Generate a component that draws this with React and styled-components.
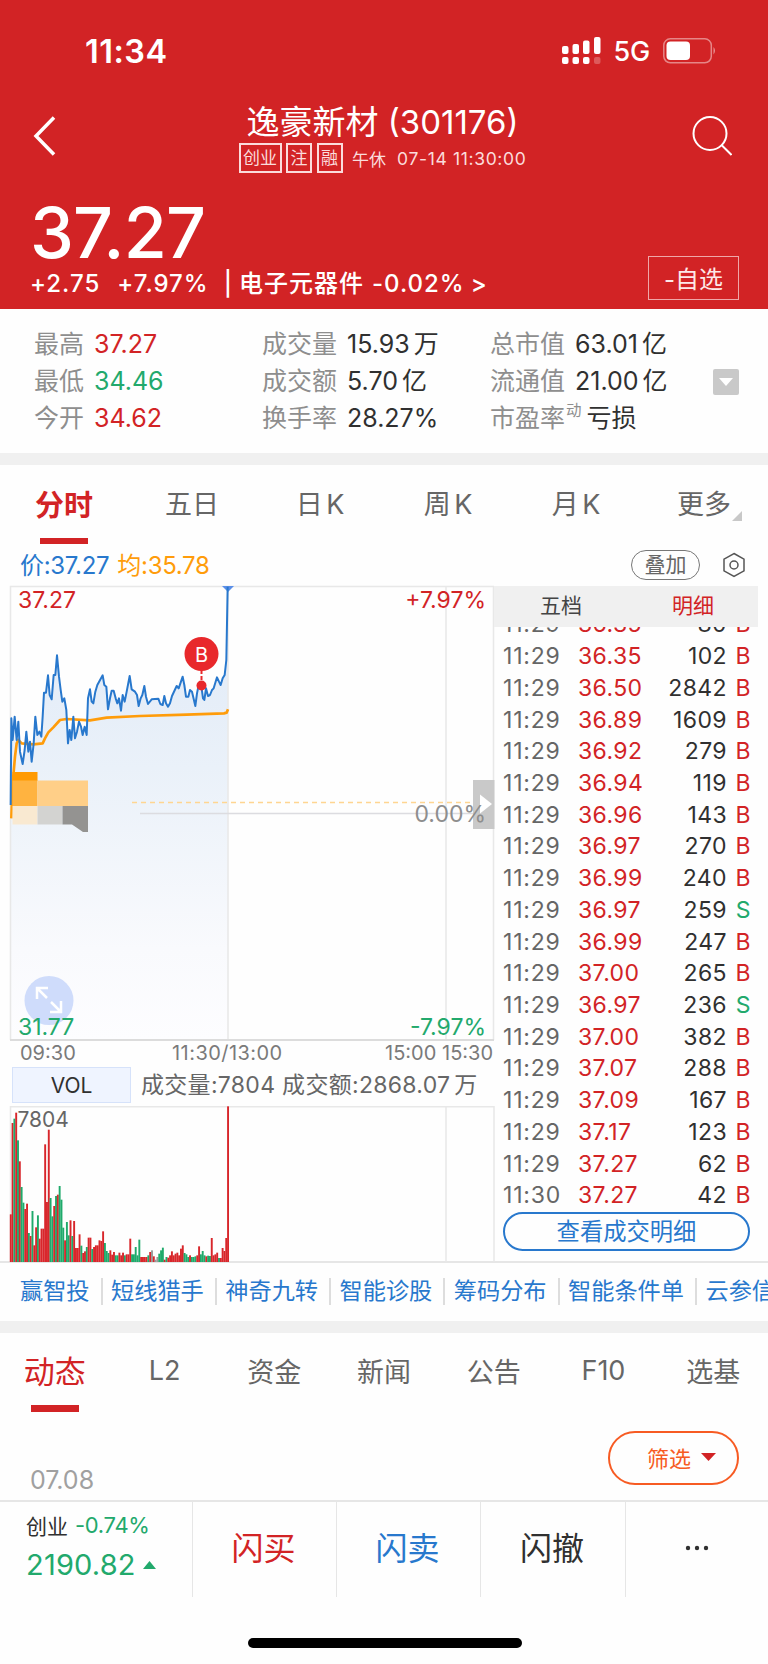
import React, { useState } from "react";
import styled, { createGlobalStyle, css } from "styled-components";

const color = {
  red: "#d22325",
  green: "#22a96c",
  blue: "#2878cd",
  orange: "#ff9c0a",
  dark: "#303030",
  gray: "#666",
  light: "#8e8e8e",
  line: "#e6e6e6",
  band: "#f0f0f0",
};

const stats = [
  [
    { label: "最高", value: "37.27", tone: "red" },
    { label: "最低", value: "34.46", tone: "green" },
    { label: "今开", value: "34.62", tone: "red" },
  ],
  [
    { label: "成交量", value: "15.93", unit: "万" },
    { label: "成交额", value: "5.70", unit: "亿" },
    { label: "换手率", value: "28.27%" },
  ],
  [
    { label: "总市值", value: "63.01", unit: "亿" },
    { label: "流通值", value: "21.00", unit: "亿" },
    { label: "市盈率", sup: "动", value: "亏损" },
  ],
];

const periods = ["分时", "五日", "日 K", "周 K", "月 K", "更多"];
const sections = ["动态", "L2", "资金", "新闻", "公告", "F10", "选基"];
const tools = [
  "赢智投",
  "短线猎手",
  "神奇九转",
  "智能诊股",
  "筹码分布",
  "智能条件单",
  "云参信息",
];

const trades = [
  ["11:29", "36.35", "80", "B"],
  ["11:29", "36.35", "102", "B"],
  ["11:29", "36.50", "2842", "B"],
  ["11:29", "36.89", "1609", "B"],
  ["11:29", "36.92", "279", "B"],
  ["11:29", "36.94", "119", "B"],
  ["11:29", "36.96", "143", "B"],
  ["11:29", "36.97", "270", "B"],
  ["11:29", "36.99", "240", "B"],
  ["11:29", "36.97", "259", "S"],
  ["11:29", "36.99", "247", "B"],
  ["11:29", "37.00", "265", "B"],
  ["11:29", "36.97", "236", "S"],
  ["11:29", "37.00", "382", "B"],
  ["11:29", "37.07", "288", "B"],
  ["11:29", "37.09", "167", "B"],
  ["11:29", "37.17", "123", "B"],
  ["11:29", "37.27", "62", "B"],
  ["11:30", "37.27", "42", "B"],
];

// the two lines are stored at 3x resolution
const priceLine =
  "32,705 34,445 38,510 44,440 50,510 55,455 60,545 68,582 74,540 79,485 85,545 90,515 95,575 101,520 106,440 112,495 118,485 124,500 128,440 132,368 138,368 144,316 149,375 155,388 161,315 166,315 171,256 177,320 182,360 187,395 193,385 199,420 204,520 209,480 214,510 220,440 225,505 231,485 237,455 243,470 248,495 254,470 260,495 264,385 270,358 275,395 280,400 286,365 292,345 308,316 313,345 319,350 324,418 330,385 335,362 341,362 347,385 352,400 357,385 363,422 368,375 374,395 380,365 389,318 395,358 405,365 411,375 416,408 422,385 427,375 433,348 438,380 444,402 455,388 475,386 481,402 488,405 493,378 498,400 504,410 510,400 516,378 530,348 536,355 548,320 553,345 558,380 565,380 570,360 576,365 586,408 591,370 597,340 604,348 609,385 613,390 618,355 624,378 630,375 636,360 641,355 651,322 657,335 662,345 668,325 674,315 679,270 683,50";
const averageLine =
  "34,745 38,640 45,560 50,520 55,510 65,520 100,523 128,520 135,505 145,487 160,472 180,450 200,447 270,451 320,443 420,438 560,434 672,430 680,428 684,418";

// bar height + colour (r: up, g: down, n: flat)
const volumes =
  "143r 417r 430g 448r 365g 302r 225g 178g 159r 175r 87g 78r 153g 50r 104r 140g 70r 100r 100r 353r 180r 397r 192g 137g 168r 198g 202r 228g 187g 103g 65r 120g 80g 125r 78g 123r 42r 42r 83r 49g 27r 32r 45g 73r 73r 39g 45r 50r 50r 65r 63r 92r 57g 33g 27g 35r 22r 30r 20g 20g 28r 20r 28r 20g 23r 23r 70r 23g 23g 45g 20g 67g 15r 15r 15r 15r 20g 30r 35n 17r 7n 15n 25g 35g 43g 7r 15g 13r 20r 32r 20r 25r 28r 20r 40r 50r 27g 23g 15g 20r 15g 15g 17g 20r 47r 23g 33g 20g 17r 19g 18g 72r 20r 23r 28r 12g 12r 42r 33r 72r 467r"
    .split(" ")
    .map((v) => ({ height: parseInt(v, 10) / 3, kind: v.slice(-1) }));

const barColor = { r: "#d8262b", g: "#1faa6b", n: "#999" };

const PriceChart = () => (
  <Chart width="494" height="455" viewBox="0 0 494 455">
    <defs>
      <linearGradient id="area" x1="0" y1="0" x2="0" y2="1">
        <stop offset="0" stopColor="#dfe9f7" />
        <stop offset="0.4" stopColor="#eaf1f9" />
        <stop offset="0.8" stopColor="#f9fafd" />
        <stop offset="1" stopColor="#fdfdff" />
      </linearGradient>
    </defs>
    <g transform="translate(0 -16) scale(0.33333)">
      <polygon points={`${priceLine} 683,1410 32,1410`} fill="url(#area)" />
    </g>
    <g fill="none" stroke="#e8e8e8" strokeWidth="1.500">
      <path d="M10.500 454V0.500H494M228 0V454M446 0V454M493.500 0V454" />
      <path d="M140 227.500H494" stroke="#dcdce0" />
      <path d="M10 454H494" stroke="#dcdcdc" strokeWidth="2" />
    </g>
    <path
      d="M132 216.500H494"
      stroke="#ffd591"
      strokeWidth="1.500"
      strokeDasharray="5 4"
    />
    <path d="M222 0H234L228 6Z" fill="#5b8fe8" />
    <g
      transform="translate(0 -16) scale(0.33333)"
      fill="none"
      strokeLinejoin="round"
    >
      <polyline points={averageLine} stroke={color.orange} strokeWidth="8" />
      <polyline points={priceLine} stroke={color.blue} strokeWidth="6" />
    </g>
    <path
      d="M201.500 84V98"
      stroke="#e8282b"
      strokeWidth="2"
      strokeDasharray="4 2"
    />
    <circle cx="201.500" cy="68" r="17" fill="#e8282b" />
    <circle cx="201.500" cy="99.500" r="5" fill="#e8282b" />
    <ChartText x="201.500" y="75.500" $size={20} $fill="#fff" textAnchor="middle">
      B
    </ChartText>
    <g>
      <rect x="12.500" y="186" width="25" height="9" fill="#ff9a02" />
      <rect x="12.500" y="194.500" width="25" height="25.500" fill="#ffb340" />
      <rect x="37.500" y="194.500" width="50.500" height="25.500" fill="#ffcf88" />
      <rect x="12.500" y="220" width="25" height="18.500" fill="#f9e9d1" />
      <rect x="37.500" y="220" width="25" height="18.500" fill="#d3d3d1" />
      <path d="M62.500 220H88V246H83L72 238.500H62.500Z" fill="#949391" />
    </g>
    <circle cx="49" cy="414.500" r="24.500" fill="#cfdcfb" />
    <path
      d="M37 413V402H48M37 402L47 412M51 416L61 426M50 426H61V415"
      fill="none"
      stroke="#fff"
      strokeWidth="2.500"
    />
    <rect x="473" y="194" width="21.500" height="49" fill="#c9c9c9" />
    <path d="M480 208.500L492 218L480 227.500Z" fill="#fff" />
    <ChartText x="18" y="22" $fill={color.red}>
      37.27
    </ChartText>
    <ChartText x="486" y="22" $fill={color.red} textAnchor="end">
      +7.97%
    </ChartText>
    <ChartText x="486" y="235.500" $fill={color.light} textAnchor="end">
      0.00%
    </ChartText>
    <ChartText x="18" y="449" $fill={color.green}>
      31.77
    </ChartText>
    <ChartText x="486" y="449" $fill={color.green} textAnchor="end">
      -7.97%
    </ChartText>
  </Chart>
);

const VolumeChart = () => {
  const step = 217.3 / (volumes.length - 1);
  return (
    <Chart width="494" height="156" viewBox="0 0 494 156">
      <path
        d="M10.500 156V0.750H494M446 0V156M494 0V156"
        fill="none"
        stroke="#e8e8e8"
        strokeWidth="1.500"
      />
      {volumes.map(({ height, kind }, i) => (
        <rect
          key={i}
          x={9.8 + i * step}
          y={156 - height}
          width={step + 0.1}
          height={height}
          fill={barColor[kind]}
        />
      ))}
      <ChartText x="17.500" y="20.500" $size={21} $fill={color.gray}>
        7804
      </ChartText>
    </Chart>
  );
};

const App = () => {
  const [period, setPeriod] = useState("分时");
  const [section, setSection] = useState("动态");
  const [panel, setPanel] = useState("明细");

  return (
    <Page>
      <GlobalStyle />
      <Header>
        <StatusBar>
          <Clock>11:34</Clock>
          <StatusRight>
            <svg width="40" height="28" viewBox="0 0 40 28" fill="#fff">
              <rect x="0" y="9" width="6.500" height="8" rx="2" />
              <rect x="10.500" y="7" width="6.500" height="10" rx="2" />
              <rect x="21" y="3.500" width="6.500" height="13.500" rx="2" />
              <rect x="32" y="0" width="6.500" height="17" rx="2" />
              <rect x="0" y="20" width="6.500" height="7" rx="2" />
              <rect x="10.500" y="20" width="6.500" height="7" rx="2" />
              <rect x="21" y="20" width="6.500" height="7" rx="2" />
              <rect x="32" y="20" width="6.500" height="7" rx="2" opacity="0.25" />
            </svg>
            <Network>5G</Network>
            <svg width="54" height="26" viewBox="0 0 54 26">
              <rect
                x="0.800"
                y="0.800"
                width="47.500"
                height="24"
                rx="6.500"
                fill="none"
                stroke="#fff"
                strokeOpacity="0.45"
                strokeWidth="1.500"
              />
              <rect x="3.500" y="3.500" width="23.500" height="18.500" rx="4" fill="#fff" />
              <path d="M50.500 9Q53.500 12.500 50.500 16.500Z" fill="#fff" fillOpacity="0.5" />
            </svg>
          </StatusRight>
        </StatusBar>
        <NavRow>
          <svg width="24" height="42" viewBox="0 0 24 42">
            <path
              d="M21 2.500L3 21L21 39.500"
              fill="none"
              stroke="#fff"
              strokeWidth="3.500"
            />
          </svg>
          <TitleBlock>
            <Title>逸豪新材 (301176)</Title>
            <Meta>
              <Tag>创业</Tag>
              <Tag>注</Tag>
              <Tag>融</Tag>
              <MetaText>午休</MetaText>
              <MetaText $date>07-14 11:30:00</MetaText>
            </Meta>
          </TitleBlock>
          <svg width="42" height="42" viewBox="0 0 42 42">
            <g fill="none" stroke="#fff" strokeWidth="2">
              <circle cx="20" cy="18.500" r="16.500" />
              <path d="M31.500 30L41.500 40" />
            </g>
          </svg>
        </NavRow>
        <Quote>
          <div>
            <Price>37.27</Price>
            <Change>
              <span>+2.75</span>
              <span>+7.97%</span>
              <span>|</span>
              <span>电子元器件</span>
              <span>-0.02%</span>
              <span>&gt;</span>
            </Change>
          </div>
          <WatchButton>-自选</WatchButton>
        </Quote>
      </Header>

      <Stats>
        {stats.map((column, i) => (
          <StatColumn key={i}>
            {column.map(({ label, sup, value, unit, tone }) => (
              <Stat key={label}>
                <StatLabel>{label}</StatLabel>
                {sup && <StatSup>{sup}</StatSup>}
                <StatValue $tone={tone} $tight={!!sup}>
                  {value}
                  {unit && <Unit>{unit}</Unit>}
                </StatValue>
              </Stat>
            ))}
          </StatColumn>
        ))}
        <MoreStats>
          <svg width="14" height="8" viewBox="0 0 14 8">
            <path d="M0 0H14L7 8Z" fill="#fff" />
          </svg>
        </MoreStats>
      </Stats>
      <Band />

      <Tabs $columns={6} $height={80}>
        {periods.map((name) => (
          <Tab
            key={name}
            $active={name === period}
            onClick={() => setPeriod(name)}
          >
            {name}
            {name === "更多" && <Corner />}
          </Tab>
        ))}
      </Tabs>

      <Legend>
        <LegendText $color={color.blue}>价:37.27</LegendText>
        <LegendText $color={color.orange}>均:35.78</LegendText>
        <OverlayButton>叠加</OverlayButton>
        <svg width="24" height="26" viewBox="0 0 24 26">
          <g fill="none" stroke="#555" strokeWidth="1.500">
            <path d="M12 1.500L22 7.200V18.800L12 24.500L2 18.800V7.200Z" />
            <circle cx="12" cy="13" r="4" />
          </g>
        </svg>
      </Legend>

      <Body>
        <ChartSide>
          <PriceChart />
          <TimeAxis>
            <span>09:30</span>
            <NoonLabel>11:30/13:00</NoonLabel>
            <span>15:00</span>
            <span>15:30</span>
          </TimeAxis>
          <VolumeHead>
            <Indicator>VOL</Indicator>
            <VolumeText>
              成交量:7804 成交额:2868.07<Unit>万</Unit>
            </VolumeText>
          </VolumeHead>
          <VolumeChart />
        </ChartSide>
        <TradeSide>
          <PanelTabs>
            {["五档", "明细"].map((name) => (
              <PanelTab
                key={name}
                $active={name === panel}
                onClick={() => setPanel(name)}
              >
                {name}
              </PanelTab>
            ))}
          </PanelTabs>
          <TradeList>
            {trades.map(([time, price, amount, side], i) => (
              <Trade key={i}>
                <TradeTime>{time}</TradeTime>
                <TradePrice>{price}</TradePrice>
                <TradeAmount>{amount}</TradeAmount>
                <TradeKind $kind={side}>{side}</TradeKind>
              </Trade>
            ))}
          </TradeList>
          <DetailButton>查看成交明细</DetailButton>
        </TradeSide>
      </Body>

      <Tools>
        {tools.map((name) => (
          <Tool key={name}>{name}</Tool>
        ))}
      </Tools>
      <Band />

      <Tabs $columns={7} $height={79}>
        {sections.map((name) => (
          <Tab
            key={name}
            $news
            $active={name === section}
            onClick={() => setSection(name)}
          >
            {name}
          </Tab>
        ))}
      </Tabs>
      <News>
        <NewsDate>07.08</NewsDate>
        <FilterButton>
          筛选
          <svg width="15" height="8" viewBox="0 0 15 8">
            <path d="M0 0H15L7.500 8Z" fill={color.red} />
          </svg>
        </FilterButton>
      </News>

      <BottomBar>
        <IndexCell>
          <IndexTop>
            <span>创业</span>
            <em>-0.74%</em>
          </IndexTop>
          <IndexValue>
            2190.82
            <svg width="13" height="8" viewBox="0 0 13 8">
              <path d="M6.500 0L13 8H0Z" fill={color.green} />
            </svg>
          </IndexValue>
        </IndexCell>
        <ActionCell $color={color.red}>闪买</ActionCell>
        <ActionCell $color={color.blue}>闪卖</ActionCell>
        <ActionCell $color={color.dark}>闪撤</ActionCell>
        <ActionCell $color={color.dark}>
          <svg width="24" height="6" viewBox="0 0 24 6" fill="#303030">
            <circle cx="3" cy="3" r="2.200" />
            <circle cx="12" cy="3" r="2.200" />
            <circle cx="21" cy="3" r="2.200" />
          </svg>
        </ActionCell>
      </BottomBar>
      <HomeArea>
        <HomeIndicator />
      </HomeArea>
    </Page>
  );
};

export default App;

const GlobalStyle = createGlobalStyle`
  * {
    box-sizing: border-box;
  }
  body {
    margin: 0;
    background: #fff;
    font-family: Inter, "Noto Sans CJK SC", sans-serif;
  }
  button {
    font-family: inherit;
    padding: 0;
    border: none;
    background: none;
  }
  svg {
    display: block;
    flex-shrink: 0;
  }
`;

const flexCenter = css`
  display: flex;
  align-items: center;
  justify-content: center;
`;

const Page = styled.div`
  width: 768px;
  height: 1664px;
  overflow: hidden;
  background: #fefefe;
`;

const Header = styled.header`
  height: 309px;
  background: ${color.red};
  color: #fff;
`;

const StatusBar = styled.div`
  display: flex;
  align-items: center;
  justify-content: space-between;
  height: 102px;
  padding: 0 51px 0 85px;
`;

const Clock = styled.span`
  font-size: 32.5px;
  font-weight: 600;
  letter-spacing: 0.5px;
`;

const StatusRight = styled.div`
  display: flex;
  align-items: center;
`;

const Network = styled.span`
  margin: 0 13px 0 12px;
  font-size: 27px;
  font-weight: 500;
  letter-spacing: -0.2px;
`;

const NavRow = styled.div`
  display: flex;
  justify-content: space-between;
  height: 80px;
  padding: 0 36px 0 33px;

  & > svg {
    margin-top: 13px;
  }
`;

const TitleBlock = styled.div`
  display: flex;
  flex-direction: column;
  align-items: center;
  margin-left: 18px;
`;

const Title = styled.h1`
  margin: 1px 0 2px;
  font-size: 33px;
  font-weight: 400;
  line-height: 38px;
  white-space: nowrap;
`;

const Meta = styled.div`
  display: flex;
  align-items: center;
  white-space: nowrap;
`;

const Tag = styled.span`
  height: 30px;
  margin-right: 4.5px;
  padding: 0 2.5px;
  border: 2px solid #fbdcdc;
  color: #fbdcdc;
  font-size: 17px;
  line-height: 26px;
`;

const MetaText = styled.span`
  margin-left: ${({ $date }) => ($date ? "11px" : "5px")};
  color: #fbdcdc;
  font-size: ${({ $date }) => ($date ? "17.5px" : "17px")};
  letter-spacing: ${({ $date }) => ($date ? "0.65px" : "0")};
`;

const Quote = styled.div`
  display: flex;
  align-items: flex-end;
  justify-content: space-between;
  height: 118px;
  padding: 0 29px 0 30px;
`;

const Price = styled.div`
  font-size: 70px;
  font-weight: 500;
  line-height: 68px;
  letter-spacing: -0.9px;
`;

const Change = styled.div`
  display: flex;
  align-items: center;
  font-size: 24px;
  font-weight: 500;
  line-height: 33px;
  letter-spacing: 1px;

  span:nth-child(2) {
    margin-left: 17px;
  }
  span:nth-child(3) {
    margin: 0 6px 0 15px;
  }
  span:nth-child(5) {
    margin-left: 8px;
  }
  span:nth-child(6) {
    margin-left: 6px;
  }
`;

const WatchButton = styled.button`
  width: 91px;
  height: 44px;
  padding-bottom: 2px;
  border: 1px solid #efa7a8;
  color: #fde8e8;
  font-size: 24px;
`;

const Stats = styled.section`
  display: flex;
  align-items: center;
  height: 144px;
  padding: 1px 29px 0 34px;
`;

const StatColumn = styled.div`
  width: 228px;
  flex-shrink: 0;
`;

const Stat = styled.div`
  display: flex;
  align-items: center;
  height: 37.4px;
  font-size: 25px;
  line-height: 37px;
  white-space: nowrap;
`;

const StatLabel = styled.span`
  color: ${color.light};
`;

const StatSup = styled.span`
  align-self: flex-start;
  margin-left: 1px;
  color: ${color.light};
  font-size: 15.5px;
  line-height: 22px;
`;

const toneColor = { red: color.red, green: color.green };

const StatValue = styled.span`
  margin-left: ${({ $tight }) => ($tight ? "5px" : "10px")};
  color: ${({ $tone }) => toneColor[$tone] || color.dark};
`;

const Unit = styled.span`
  margin-left: 4px;
`;

const MoreStats = styled.button`
  ${flexCenter};
  width: 26px;
  height: 26px;
  margin-left: -5px;
  border-radius: 2px;
  background: #c9c9c9;
`;

const Band = styled.div`
  height: 12px;
  background: ${color.band};
`;

const Tabs = styled.nav`
  display: grid;
  grid-template-columns: repeat(${({ $columns }) => $columns}, 1fr);
  height: ${({ $height }) => $height}px;
`;

const Tab = styled.button`
  position: relative;
  padding-bottom: 5px;
  color: ${color.gray};
  font-size: 27px;
  word-spacing: -4px;
  white-space: nowrap;

  ${({ $active, $news }) =>
    $active &&
    css`
      padding-bottom: ${$news ? "7px" : "5px"};
      color: ${color.red};
      font-size: ${$news ? "31px" : "29px"};
      font-weight: ${$news ? 400 : 700};

      &::after {
        content: "";
        position: absolute;
        left: calc(50% - 24px);
        bottom: ${$news ? "0" : "1px"};
        width: 48px;
        height: ${$news ? "7px" : "6px"};
        background: ${color.red};
      }
    `}
`;

const Corner = styled.i`
  position: absolute;
  right: 26px;
  bottom: 24px;
  border-bottom: 10px solid #c8c8c8;
  border-left: 10px solid transparent;
`;

const Legend = styled.div`
  display: flex;
  align-items: center;
  height: 41px;
  padding: 0 22px 2px 20px;
`;

const LegendText = styled.span`
  margin: -2px 8px 0 0;
  color: ${(props) => props.$color};
  font-size: 24px;
  letter-spacing: -0.3px;
`;

const OverlayButton = styled.button`
  width: 69px;
  height: 30px;
  margin: 0 22px 0 auto;
  border: 1.5px solid #777;
  border-radius: 15px;
  color: ${color.gray};
  font-size: 21px;
  line-height: 25px;
`;

const Body = styled.section`
  display: flex;
  height: 677px;
  border-bottom: 2px solid ${color.line};
`;

const ChartSide = styled.div`
  width: 494px;
`;

const Chart = styled.svg`
  overflow: visible;
`;

const ChartText = styled.text`
  fill: ${({ $fill }) => $fill};
  font-size: ${({ $size }) => $size || 23}px;
`;

const TimeAxis = styled.div`
  display: grid;
  grid-template-columns: 152px 213px 57px auto;
  height: 26px;
  padding-left: 20px;
  color: #7a7a7a;
  font-size: 20px;
  line-height: 25px;
`;

const NoonLabel = styled.span`
  letter-spacing: 0.45px;
`;

const VolumeHead = styled.div`
  display: flex;
  align-items: center;
  height: 36px;
  margin-bottom: 3px;
`;

const VolumeText = styled.span`
  padding-bottom: 4px;
  color: ${color.gray};
  font-size: 23px;
  letter-spacing: 0.3px;
  white-space: nowrap;
`;

const Indicator = styled.span`
  ${flexCenter};
  width: 119px;
  height: 36px;
  margin: 0 10px 0 12px;
  border: 1px solid #d6e2fa;
  background: #eff4ff;
  color: ${color.dark};
  font-size: 21px;
`;

const TradeSide = styled.aside`
  width: 264px;
`;

const PanelTabs = styled.div`
  display: flex;
  height: 41px;
  background: ${color.band};
`;

const PanelTab = styled.button`
  flex: 1;
  padding: 0 0 6px 2px;
  color: ${({ $active }) => ($active ? color.red : "#444")};
  font-size: 21px;
`;

const TradeList = styled.div`
  display: flex;
  flex-direction: column;
  justify-content: flex-end;
  height: 584px;
  overflow: hidden;
  font-size: 23px;
  letter-spacing: 0.4px;
`;

const Trade = styled.div`
  display: grid;
  grid-template-columns: 75px 74px 75px 24px;
  flex-shrink: 0;
  height: 31.72px;
  padding-left: 9px;
  line-height: 32px;
`;

const TradeTime = styled.span`
  color: ${color.gray};
  letter-spacing: 0.8px;
`;

const TradePrice = styled.span`
  color: ${color.red};
`;

const TradeAmount = styled.span`
  color: ${color.dark};
  text-align: right;
`;

const TradeKind = styled.span`
  color: ${({ $kind }) => ($kind === "B" ? color.red : color.green)};
  text-align: right;
`;

const DetailButton = styled.button`
  width: 247px;
  height: 39px;
  margin: 1px 0 0 9px;
  border: 2px solid ${color.blue};
  border-radius: 20px;
  color: ${color.blue};
  font-size: 23.3px;
  line-height: 34px;
`;

const Tools = styled.nav`
  display: flex;
  align-items: center;
  height: 58px;
  padding: 0 0 1px 20px;
  overflow: hidden;
`;

const Tool = styled.a`
  flex-shrink: 0;
  margin-right: 8.5px;
  padding-right: 11px;
  border-right: 2px solid #ddd;
  color: ${color.blue};
  font-size: 23.2px;
  line-height: 27px;
`;

const News = styled.section`
  display: flex;
  align-items: flex-start;
  justify-content: space-between;
  height: 88px;
  padding: 19px 29px 0 30px;
`;

const NewsDate = styled.span`
  margin-top: 34px;
  color: #a0a0a0;
  font-size: 25px;
  line-height: 30px;
`;

const FilterButton = styled.button`
  display: flex;
  align-items: center;
  width: 131px;
  height: 54px;
  padding: 0 0 3px 37px;
  border: 2px solid #f75b23;
  border-radius: 27px;
  color: #f75b23;
  font-size: 22px;

  svg {
    margin: 0 0 0 10px;
  }
`;

const BottomBar = styled.footer`
  display: grid;
  grid-template-columns: 193px 144px 144px 145px 1fr;
  height: 97px;
  border-top: 2px solid ${color.line};
`;

const IndexCell = styled.div`
  padding: 7px 0 0 26px;
  border-right: 1px solid ${color.line};
`;

const IndexTop = styled.div`
  display: flex;
  align-items: center;
  height: 32px;
  color: ${color.dark};
  font-size: 21px;

  em {
    margin-left: 7px;
    color: ${color.green};
    font-style: normal;
    font-size: 22px;
    letter-spacing: -0.3px;
  }
`;

const IndexValue = styled.div`
  display: flex;
  align-items: center;
  height: 47px;
  color: ${color.green};
  font-size: 29px;
  letter-spacing: 0.2px;

  svg {
    margin-left: 7px;
  }
`;

const ActionCell = styled.button`
  ${flexCenter};
  padding: 0 2px 8px 0;
  color: ${(props) => props.$color};
  font-size: 32px;

  &:not(:last-child) {
    border-right: 1px solid ${color.line};
  }

  &:last-child {
    padding: 0 0 3px;
  }
`;

const HomeArea = styled.div`
  display: flex;
  justify-content: center;
  padding-top: 41px;
`;

const HomeIndicator = styled.div`
  width: 274px;
  height: 10px;
  margin-left: 2px;
  border-radius: 5px;
  background: #000;
`;
